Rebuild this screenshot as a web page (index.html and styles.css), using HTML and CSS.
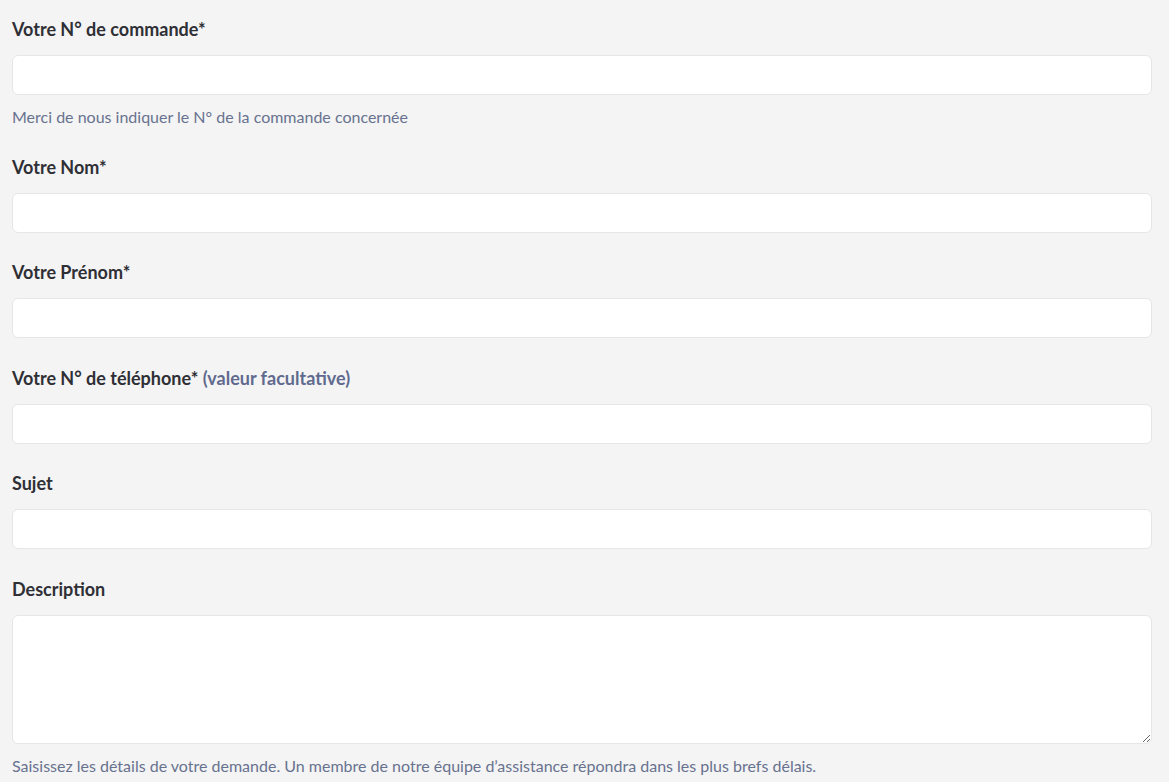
FILE: index.html
```html
<!DOCTYPE html>
<html lang="fr">
<head>
    <meta charset="UTF-8">
    <meta name="viewport" content="width=device-width, initial-scale=1.0">
    <title>Demande d'assistance</title>
    <link rel="stylesheet" href="styles.css">
</head>
<body>
    <form class="request-form">
        <div class="field">
            <label class="label" for="order">Votre N° de commande*</label>
            <input class="input" type="text" id="order">
            <p class="hint">Merci de nous indiquer le N° de la commande concernée</p>
        </div>
        <div class="field">
            <label class="label" for="lastname">Votre Nom*</label>
            <input class="input" type="text" id="lastname">
        </div>
        <div class="field">
            <label class="label" for="firstname">Votre Prénom*</label>
            <input class="input" type="text" id="firstname">
        </div>
        <div class="field">
            <label class="label" for="phone">Votre N° de téléphone* <span class="optional">(valeur facultative)</span></label>
            <input class="input" type="text" id="phone">
        </div>
        <div class="field">
            <label class="label" for="subject">Sujet</label>
            <input class="input" type="text" id="subject">
        </div>
        <div class="field">
            <label class="label" for="description">Description</label>
            <textarea class="input textarea" id="description"></textarea>
            <p class="hint">Saisissez les détails de votre demande. Un membre de notre équipe d’assistance répondra dans les plus brefs délais.</p>
        </div>
    </form>
</body>
</html>
```

FILE: styles.css
```css
body {
    margin: 0;
    background-color: #f4f4f4;
    font-family: Lato, "Liberation Sans", sans-serif;
    color: #2f2f36;
}
.request-form {
    padding: 16px 17px 0 12px;
}
.field {
    margin-bottom: 26.5px;
}
.label {
    display: block;
    font-size: 18px;
    font-weight: 700;
    line-height: 26px;
    margin-bottom: 13px;
}
.optional {
    color: #5f6a8e;
}
.input {
    display: block;
    box-sizing: border-box;
    width: 100%;
    height: 40px;
    background-color: #ffffff;
    border: 1px solid #e6e6e6;
    border-radius: 6px;
    font-family: inherit;
    font-size: 15px;
    padding: 8px 12px;
    outline: none;
}
.textarea {
    height: 129px;
    resize: vertical;
}
.hint {
    margin: 11px 0 0;
    font-size: 16px;
    line-height: 21px;
    color: #68728f;
}
```
